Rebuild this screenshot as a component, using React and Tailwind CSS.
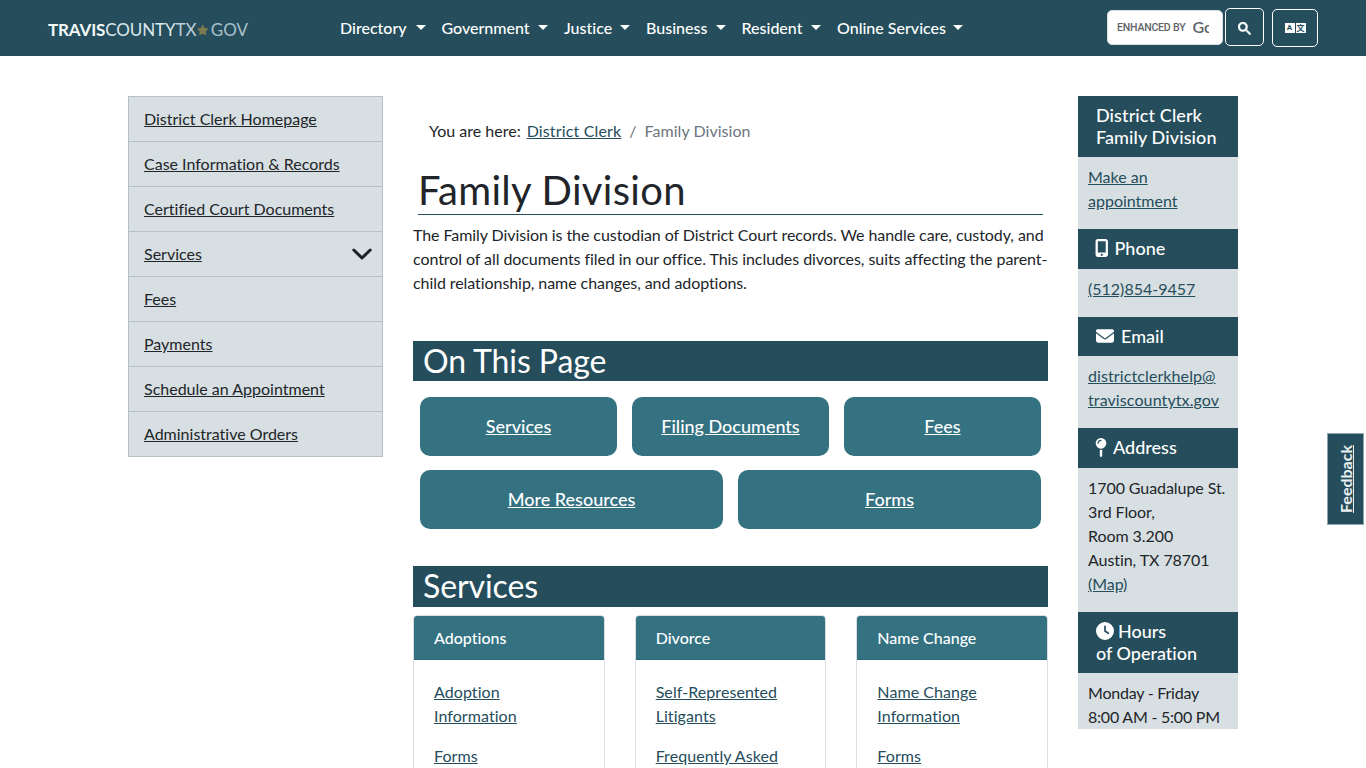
import React from "react";
import { FaClock, FaEnvelope, FaMapPin, FaMobileScreenButton, FaStar } from "react-icons/fa6";

const navItems = [
  { label: "Directory", width: "w-[101.5px]" },
  { label: "Government", width: "w-[122.5px]" },
  { label: "Justice", width: "w-[82px]" },
  { label: "Business", width: "w-[95.5px]" },
  { label: "Resident", width: "w-[95.5px]" },
  { label: "Online Services", width: "w-[142px]" },
];

const sideLinks = [
  { label: "District Clerk Homepage" },
  { label: "Case Information & Records" },
  { label: "Certified Court Documents" },
  { label: "Services", expandable: true },
  { label: "Fees" },
  { label: "Payments" },
  { label: "Schedule an Appointment" },
  { label: "Administrative Orders" },
];

const cards = [
  { title: "Adoptions", links: ["Adoption Information", "Forms"] },
  { title: "Divorce", links: ["Self-Represented Litigants", "Frequently Asked Questions"] },
  { title: "Name Change", links: ["Name Change Information", "Forms"] },
];

const Logo = () => (
  <a href="#" className="flex items-center w-[200px] ml-12 mt-[3px] text-[17px] leading-none whitespace-nowrap">
    <span className="font-bold tracking-[-0.15px] text-[#f3f8fa]">TRAVIS</span>
    <span className="tracking-[-0.1px] text-[#dce8ee]">COUNTY</span>
    <span className="tracking-[-0.1px] text-[#bccfd8]">TX</span>
    <FaStar className="w-[12px] h-[12px] ml-px mr-0.5 text-[#7d7a50]" />
    <span className="text-[#a9c0cb]">GOV</span>
  </a>
);

const Header = () => (
  <header className="h-14 bg-[#254d5b] flex items-center text-white">
    <Logo />
    <nav className="flex ml-[92px] w-[767px]">
      {navItems.map((item) => (
        <a key={item.label} href="#" className={`flex items-center justify-between pr-4 font-medium text-base leading-6 whitespace-nowrap ${item.width}`}>
          {item.label}
          <span className="mb-0.5 border-t-[5px] border-x-[5px] border-x-transparent border-t-white" />
        </a>
      ))}
    </nav>
    <div className="flex">
      <div className="w-[116px] h-[35px] mt-px bg-white border border-[#d8dfe2] rounded-[5px] flex items-center pl-[9px] font-['Roboto',sans-serif] text-[#5f6368]">
        <span className="text-[10.5px] font-medium tracking-[-0.18px] whitespace-nowrap w-[75.5px]">ENHANCED BY</span>
        <span className="w-4 -mt-0.5 overflow-hidden whitespace-nowrap font-['Lato',sans-serif] font-semibold text-[16px] leading-6">Go</span>
      </div>
      <button className="w-[39px] h-[38px] -mt-px ml-0.5 pt-0.5 border border-white rounded-[5px] flex items-center justify-center">
        <svg className="w-[13px] h-[13px]" viewBox="0 0 13 13" fill="currentColor">
          <path d="m4.8495 7.8226c0.82666 0 1.5262-0.29146 2.0985-0.87438 0.57232-0.58292 0.86378-1.2877 0.87438-2.1144 0.010599-0.82666-0.28086-1.5262-0.87438-2.0985-0.59352-0.57232-1.293-0.86378-2.0985-0.87438-0.8055-0.010599-1.5103 0.28086-2.1144 0.87438-0.60414 0.59352-0.8956 1.293-0.87438 2.0985 0.021197 0.8055 0.31266 1.5103 0.87438 2.1144 0.56172 0.60414 1.2665 0.8956 2.1144 0.87438zm4.4695 0.2115 3.681 3.6819-1.259 1.284-3.6817-3.7 0.0019784-0.69479-0.090043-0.098846c-0.87973 0.76087-1.92 1.1413-3.1207 1.1413-1.3553 0-2.5025-0.46363-3.4417-1.3909s-1.4088-2.0686-1.4088-3.4239c0-1.3553 0.4696-2.4966 1.4088-3.4239 0.9392-0.92727 2.0864-1.3969 3.4417-1.4088 1.3553-0.011889 2.4906 0.45771 3.406 1.4088 0.9154 0.95107 1.379 2.0924 1.3909 3.4239 0 1.2126-0.38043 2.2588-1.1413 3.1385l0.098834 0.090049z" stroke="currentColor" strokeWidth="0.4" />
        </svg>
      </button>
      <button className="w-[46px] h-[38px] ml-2 border border-white rounded-[5px] flex items-center justify-center gap-px text-[8px] leading-[10px] font-bold text-[#254d5b]">
        <span className="w-2.5 h-2.5 bg-white text-center font-['Roboto',sans-serif]">A</span>
        <span className="w-2.5 h-2.5 bg-white text-center font-['Noto_Sans_CJK_SC',sans-serif]">文</span>
      </button>
    </div>
  </header>
);

const SideMenu = () => (
  <ul className="w-[255px] border border-[#b4c0c5] divide-y divide-[#b4c0c5] bg-[#d8dfe2]">
    {sideLinks.map((link) => (
      <li key={link.label} className="flex items-center justify-between h-[45px] last:h-11 pl-[15px] pr-2.5">
        <a href="#" className="underline">{link.label}</a>
        {link.expandable && (
          <svg className="w-5 h-3" viewBox="0 0 20 12" fill="none" stroke="#1c2226" strokeWidth="3" strokeLinecap="round" strokeLinejoin="round">
            <path d="M1.8 2 10 10l8.2-8" />
          </svg>
        )}
      </li>
    ))}
  </ul>
);

const SectionTitle = ({ children }) => (
  <h2 className="h-[40.4px] pl-2.5 bg-[#254d5b] text-white text-[32px] leading-[40px] tracking-[-0.1px]">{children}</h2>
);

const Tile = ({ children }) => (
  <a href="#" className="flex-1 h-[59px] pb-0.5 rounded-[10px] bg-[#347282] text-white text-lg font-medium underline flex items-center justify-center">
    {children}
  </a>
);

const Main = () => (
  <main className="w-[635px] ml-[30px]">
    <div className="flex pt-[23px] pl-4">
      <span className="mr-1.5">You are here:</span>
      <a href="#" className="underline text-[#254d5b] tracking-[0.15px]">District Clerk</a>
      <span className="px-2 text-[#6c757d]">/</span>
      <span className="text-[#6c757d] tracking-[0.05px]">Family Division</span>
    </div>
    <h1 className="mt-6 mx-[5px] h-[48px] text-[40px] leading-[46px] tracking-[0.3px] border-b border-[#254d5b]">Family Division</h1>
    <p className="mt-2 mb-[46px] tracking-[-0.07px] whitespace-nowrap">
      The Family Division is the custodian of District Court records. We handle care, custody, and<br />
      control of all documents filed in our office. This includes divorces, suits affecting the parent-<br />
      child relationship, name changes, and adoptions.
    </p>
    <SectionTitle>On This Page</SectionTitle>
    <div className="px-[7px] pt-4 pb-[37px] space-y-3.5">
      <div className="flex gap-[15px]">
        <Tile>Services</Tile>
        <Tile>Filing Documents</Tile>
        <Tile>Fees</Tile>
      </div>
      <div className="flex gap-[15px]">
        <Tile>More Resources</Tile>
        <Tile>Forms</Tile>
      </div>
    </div>
    <SectionTitle>Services</SectionTitle>
    <div className="flex gap-[30px] mt-2">
      {cards.map((card) => (
        <div key={card.title} className="flex-1 h-64 border border-[#dcdfe1] rounded-[4px]">
          <h3 className="h-11 pl-5 bg-[#347282] border-b border-[#2d6674] rounded-t-[3px] text-white font-medium leading-[44px]">{card.title}</h3>
          <div className="px-5 pt-5 space-y-4">
            {card.links.map((link) => (
              <p key={link} className="tracking-[0.07px]"><a href="#" className="underline text-[#254d5b]">{link}</a></p>
            ))}
          </div>
        </div>
      ))}
    </div>
  </main>
);

const InfoTitle = ({ className, children }) => (
  <h3 className={`pl-[18px] bg-[#254d5b] text-white text-lg leading-[22px] font-medium ${className}`}>{children}</h3>
);

const InfoPanel = () => (
  <aside className="w-40 ml-[30px] h-[633px] overflow-hidden bg-[#d8dfe2]">
    <InfoTitle className="h-[61px] pt-2 tracking-[0.1px]">District Clerk<br />Family Division</InfoTitle>
    <div className="h-[72px] pt-2 pl-2.5"><a href="#" className="underline text-[#254d5b]">Make an<br />appointment</a></div>
    <InfoTitle className="h-10 pb-0.5 flex items-center"><FaMobileScreenButton className="w-[13.5px] h-[18px] -ml-px mr-1.5" />Phone</InfoTitle>
    <div className="h-12 pt-2 pl-2.5"><a href="#" className="underline text-[#254d5b]">(512)854-9457</a></div>
    <InfoTitle className="h-[39px] pb-px flex items-center"><FaEnvelope className="w-[18px] h-[18px] mr-[7px]" />Email</InfoTitle>
    <div className="h-[72px] pt-2 pl-2.5 tracking-[0.1px]"><a href="#" className="underline text-[#254d5b]">districtclerkhelp@<br />traviscountytx.gov</a></div>
    <InfoTitle className="h-10 pb-0.5 flex items-center"><FaMapPin className="w-3 h-[19px] -ml-px mr-1.5" />Address</InfoTitle>
    <div className="h-36 pt-2 pl-2.5 tracking-[-0.07px]">
      1700 Guadalupe St.<br />3rd Floor,<br />Room 3.200<br />Austin, TX 78701<br />
      <a href="#" className="underline text-[#254d5b]">(Map)</a>
    </div>
    <InfoTitle className="h-[61px] pt-2">
      <span className="flex items-center"><FaClock className="w-[18px] h-[18px] mr-1" />Hours</span>
      of Operation
    </InfoTitle>
    <div className="pt-2 pl-2.5 tracking-[-0.22px]">Monday - Friday<br />8:00 AM - 5:00 PM</div>
  </aside>
);

const App = () => (
  <div className="h-screen overflow-hidden bg-white font-['Lato',sans-serif] text-base leading-6 text-[#212529] [font-variant-ligatures:none]">
    <Header />
    <div className="flex items-start pt-10 pl-32">
      <SideMenu />
      <Main />
      <InfoPanel />
    </div>
    <a href="#" className="fixed left-[1327px] top-[433px] w-[37px] h-[92px] bg-[#254d5b] border border-[#8fa4ac] text-[#e9eff1] font-bold underline flex items-center justify-center">
      <span className="-rotate-90">Feedback</span>
    </a>
  </div>
);

export default App;
